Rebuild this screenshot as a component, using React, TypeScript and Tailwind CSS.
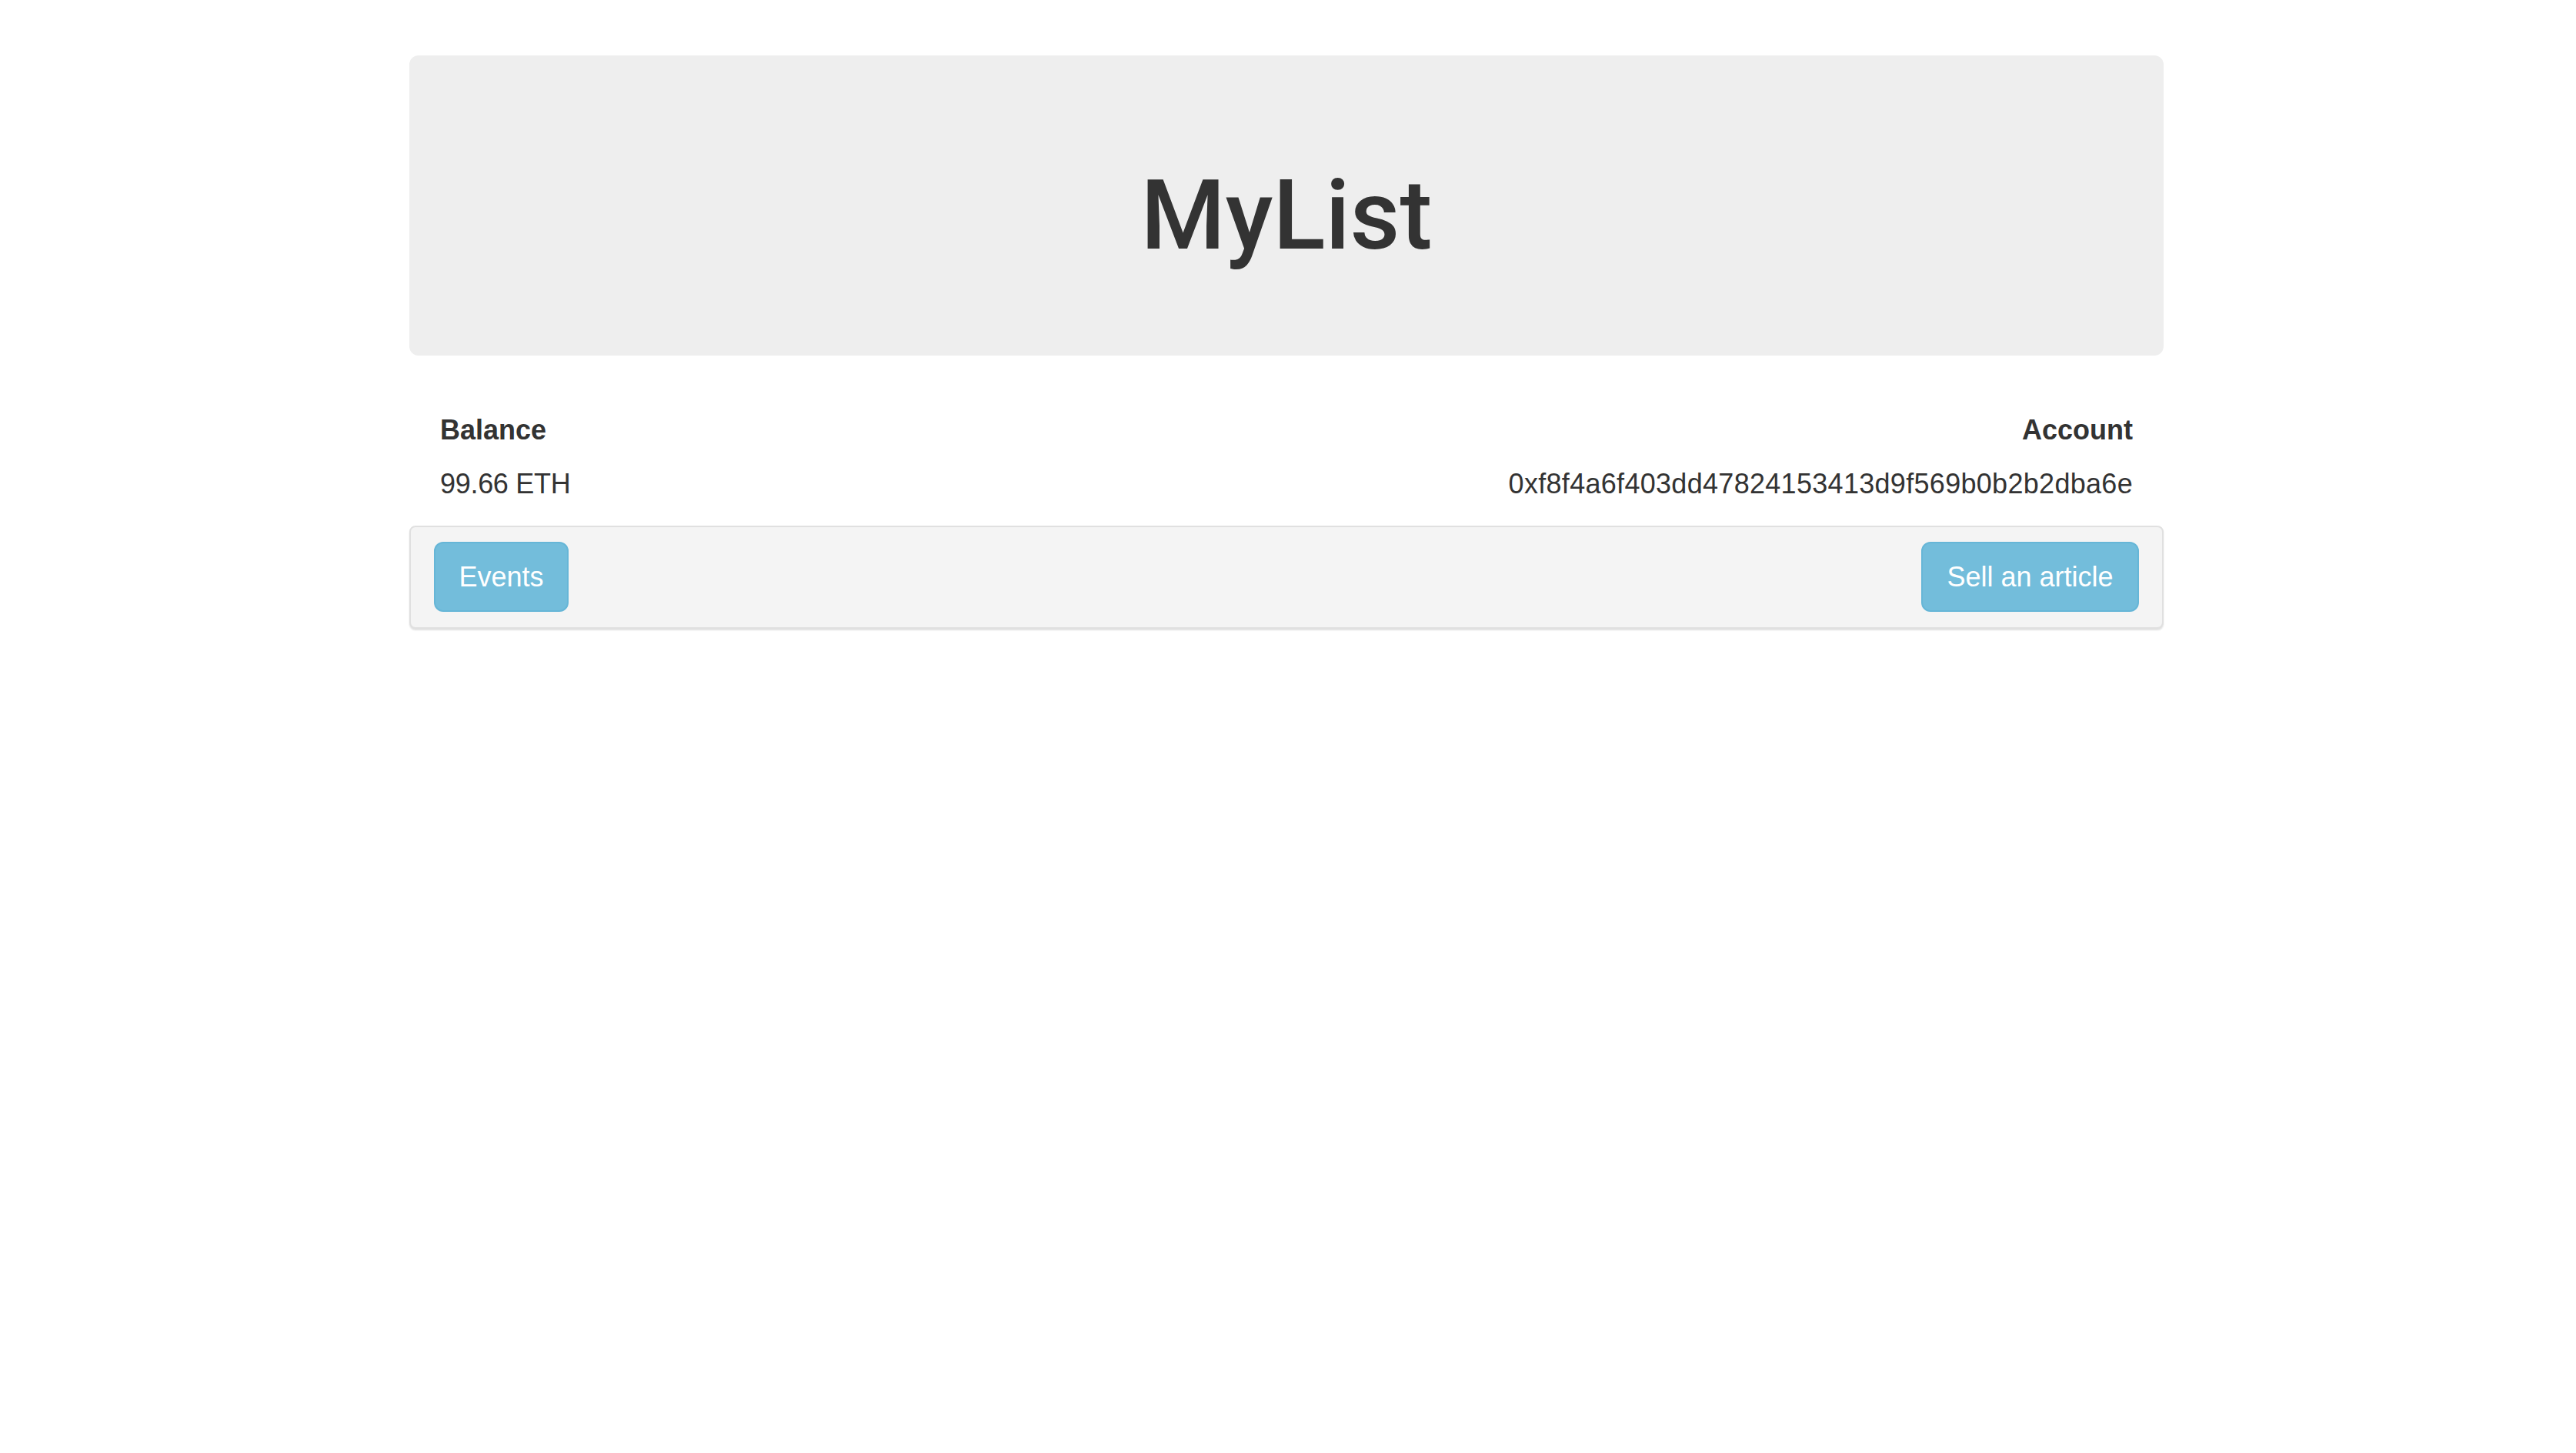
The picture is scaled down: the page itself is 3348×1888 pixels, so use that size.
import React from "react";

const account = "0xf8f4a6f403dd47824153413d9f569b0b2b2dba6e";
const balance = "99.66 ETH";

const sans = "font-['Liberation_Sans',Arial,sans-serif]";

const App = () => {
  return (
    <div className={`min-h-screen bg-white pr-[4px] text-[#333333] ${sans}`}>
      <div className="mx-auto w-[2280px] pt-[72px]">
        {/* jumbotron */}
        <div className="h-[390px] rounded-[12px] bg-[#eeeeee] pt-[139px] text-center">
          <h1 className="font-['Roboto',sans-serif] text-[126px] font-medium leading-[139px] text-[#333333]">
            MyList
          </h1>
        </div>

        {/* balance / account */}
        <div className="mt-[62px] flex justify-between px-[40px] text-[36px] leading-[70px]">
          <div>
            <div className="font-bold">Balance</div>
            <div className="tracking-[-0.3px]">{balance}</div>
          </div>
          <div className="text-right">
            <div className="font-bold">Account</div>
            <div className="tracking-[0.3px]">{account}</div>
          </div>
        </div>

        {/* toolbar */}
        <div className="mt-[19px] flex items-center justify-between rounded-[8px] border-2 border-[#e0e0e0] bg-[#f4f4f4] px-[30px] pb-[20px] pt-[19px] shadow-[0_2px_2px_rgba(0,0,0,0.12)]">
          <button className="flex h-[91px] w-[175px] items-center justify-center rounded-[12px] border-2 border-[#66b6d7] bg-[#73bddb] text-[36px] text-white">
            Events
          </button>
          <button className="flex h-[91px] w-[283px] items-center justify-center rounded-[12px] border-2 border-[#66b6d7] bg-[#73bddb] text-[36px] text-white">
            Sell an article
          </button>
        </div>
      </div>
    </div>
  );
};

export default App;
